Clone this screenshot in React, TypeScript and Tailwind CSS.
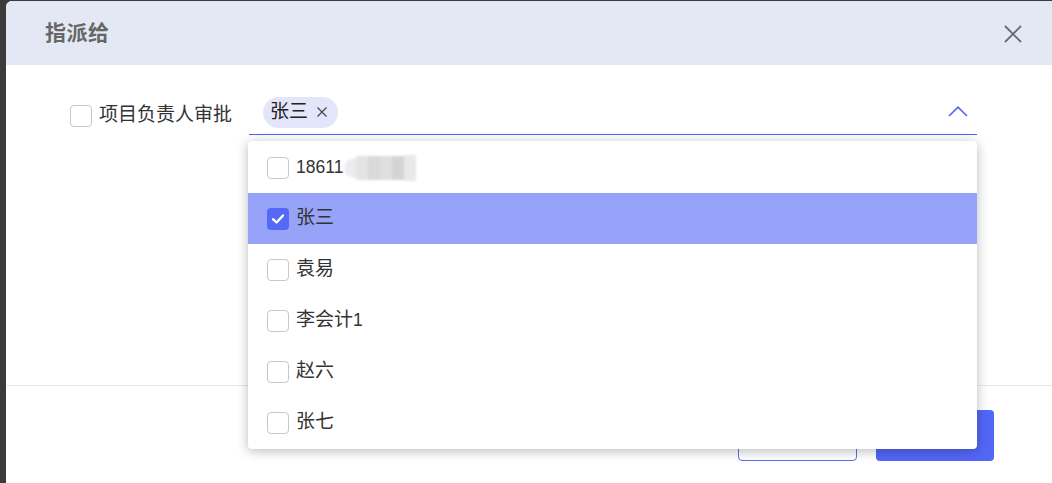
import React from "react";

const items = [
  { label: "18611", checked: false, blur: true },
  { label: "张三", checked: true },
  { label: "袁易", checked: false },
  { label: "李会计", suffix: "1", checked: false },
  { label: "赵六", checked: false },
  { label: "张七", checked: false },
];

function Box({ checked }: { checked: boolean }) {
  if (checked) {
    return (
      <span className="w-[22px] h-[22px] rounded-[4px] bg-[#5668f6] flex items-center justify-center shrink-0">
        <svg width="16" height="16" viewBox="0 0 16 16" fill="none">
          <path d="M3 8.2 L6.5 11.5 L13 4.5" stroke="white" strokeWidth="2.4" strokeLinecap="round" strokeLinejoin="round" />
        </svg>
      </span>
    );
  }
  return <span className="w-[22px] h-[22px] rounded-[4px] border border-[#c8c8c8] bg-white shrink-0" />;
}

export default function App() {
  return (
    <div
      className="w-[1052px] h-[483px] bg-[#3b3b3b] pt-[1px] pl-[6px] overflow-hidden relative"
      style={{ fontFamily: '"Liberation Sans", "Noto Sans CJK SC", sans-serif' }}
    >
      <div className="bg-white h-full rounded-tl-[6px] flex flex-col">
        <div className="h-[64px] bg-[#e4e8f4] rounded-tl-[6px] flex items-center justify-between pl-[39px] pr-[30px] shrink-0">
          <span className="text-[21px] font-bold text-[#666666] tracking-[0.5px]">指派给</span>
          <svg width="18" height="18" viewBox="0 0 18 18" fill="none" className="mt-[2px]">
            <path d="M1 1 L17 17 M17 1 L1 17" stroke="#6b6b6b" strokeWidth="1.8" />
          </svg>
        </div>
        <div className="h-[321px] border-b border-[#e8e8e8] shrink-0 pt-[31px] pl-[64px] flex items-start">
          <div className="flex items-center h-[39px] gap-[7px] w-[168px] shrink-0">
            <Box checked={false} />
            <span className="text-[19px] text-[#333333] whitespace-nowrap">项目负责人审批</span>
          </div>
          <div className="ml-[11px] w-[728px] h-[39px] border-b border-[#4f63f5] flex items-center justify-between pl-[14px] pr-[9px]">
            <span className="h-[31px] pl-[7px] pr-[10px] rounded-full bg-[#e3e6fa] flex items-center gap-[8px] text-[19px] text-[#222222] mt-[-6px]">
              张三
              <svg width="12" height="12" viewBox="0 0 12 12" fill="none">
                <path d="M1.5 1.5 L10.5 10.5 M10.5 1.5 L1.5 10.5" stroke="#444" strokeWidth="1.2" />
              </svg>
            </span>
            <svg width="20" height="11" viewBox="0 0 20 11" fill="none" className="mt-[-8px]">
              <path d="M1 10 L10 1.2 L19 10" stroke="#4f63f5" strokeWidth="1.6" />
            </svg>
          </div>
        </div>
        <div className="flex justify-end gap-[19px] pt-[24px] pr-[58px]">
          <div className="w-[119px] h-[51px] rounded-[4px] border border-[#5b6df6] bg-white" />
          <div className="w-[118px] h-[51px] rounded-[4px] bg-[#5367f7]" />
        </div>
      </div>

      <div className="absolute left-[248px] top-[141px] w-[729px] h-[308px] bg-white rounded-[4px] shadow-[0_2px_12px_rgba(0,0,0,0.28)] py-[1px]">
        {items.map((it) => (
          <div
            key={it.label}
            className={`h-[51px] flex items-center pl-[19px] gap-[7px] ${it.checked ? "bg-[#97a3f9]" : ""}`}
          >
            <Box checked={it.checked} />
            {it.blur ? (
              <span className="text-[17.5px] text-[#333333]">{it.label}</span>
            ) : (
              <span className="text-[19px] text-[#333333]">
                {it.label}
                {it.suffix && <span className="text-[17.5px]">{it.suffix}</span>}
              </span>
            )}
            {it.blur && (
              <span className="flex h-[26px] items-center ml-[-6px] blur-[1px] opacity-90">
                <span className="w-[12px] h-[20px] bg-[#ebebeb] rounded-l-full" />
                <span className="w-[12px] h-[24px] bg-[#e2e2e2]" />
                <span className="w-[12px] h-[24px] bg-[#d6d6d6]" />
                <span className="w-[12px] h-[24px] bg-[#dcdcdc]" />
                <span className="w-[12px] h-[24px] bg-[#d0d0d0]" />
                <span className="w-[12px] h-[26px] bg-[#e6e6e6]" />
              </span>
            )}
          </div>
        ))}
      </div>
    </div>
  );
}
